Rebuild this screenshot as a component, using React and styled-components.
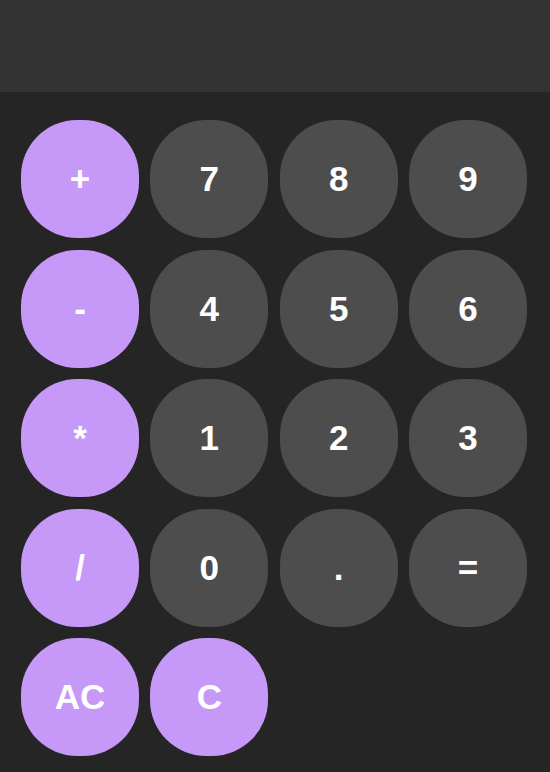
import React from "react";
import styled, { createGlobalStyle } from "styled-components";

const Global = createGlobalStyle`
  html, body { margin: 0; padding: 0; background: #252525; }
  body { font-family: "Liberation Sans", Arial, sans-serif; }
`;

const Page = styled.div`
  width: 550px;
  min-height: 772px;
  background: #252525;
  display: flex;
  flex-direction: column;
`;

const Display = styled.div`
  height: 92px;
  background: #333333;
`;

const Keypad = styled.div`
  display: grid;
  grid-template-columns: repeat(4, 118px);
  grid-auto-rows: 118px;
  column-gap: 11.33px;
  row-gap: 11.5px;
  padding: 28px 21px 0 21px;
`;

const Key = styled.button`
  border: none;
  border-radius: 56px;
  background: ${(p) => (p.$op ? "#c699f8" : "#4d4d4d")};
  color: #ffffff;
  font-family: "Liberation Sans", Arial, sans-serif;
  font-weight: 700;
  font-size: 35px;
  display: flex;
  align-items: center;
  justify-content: center;
  padding: 0;
  cursor: pointer;
`;

const keys = [
  ["+", true], ["7"], ["8"], ["9"],
  ["-", true], ["4"], ["5"], ["6"],
  ["*", true], ["1"], ["2"], ["3"],
  ["/", true], ["0"], ["."], ["="],
  ["AC", true], ["C", true],
];

export default function App() {
  return (
    <Page>
      <Global />
      <Display />
      <Keypad>
        {keys.map(([k, op]) => (
          <Key key={k} $op={!!op}>{k}</Key>
        ))}
      </Keypad>
    </Page>
  );
}
